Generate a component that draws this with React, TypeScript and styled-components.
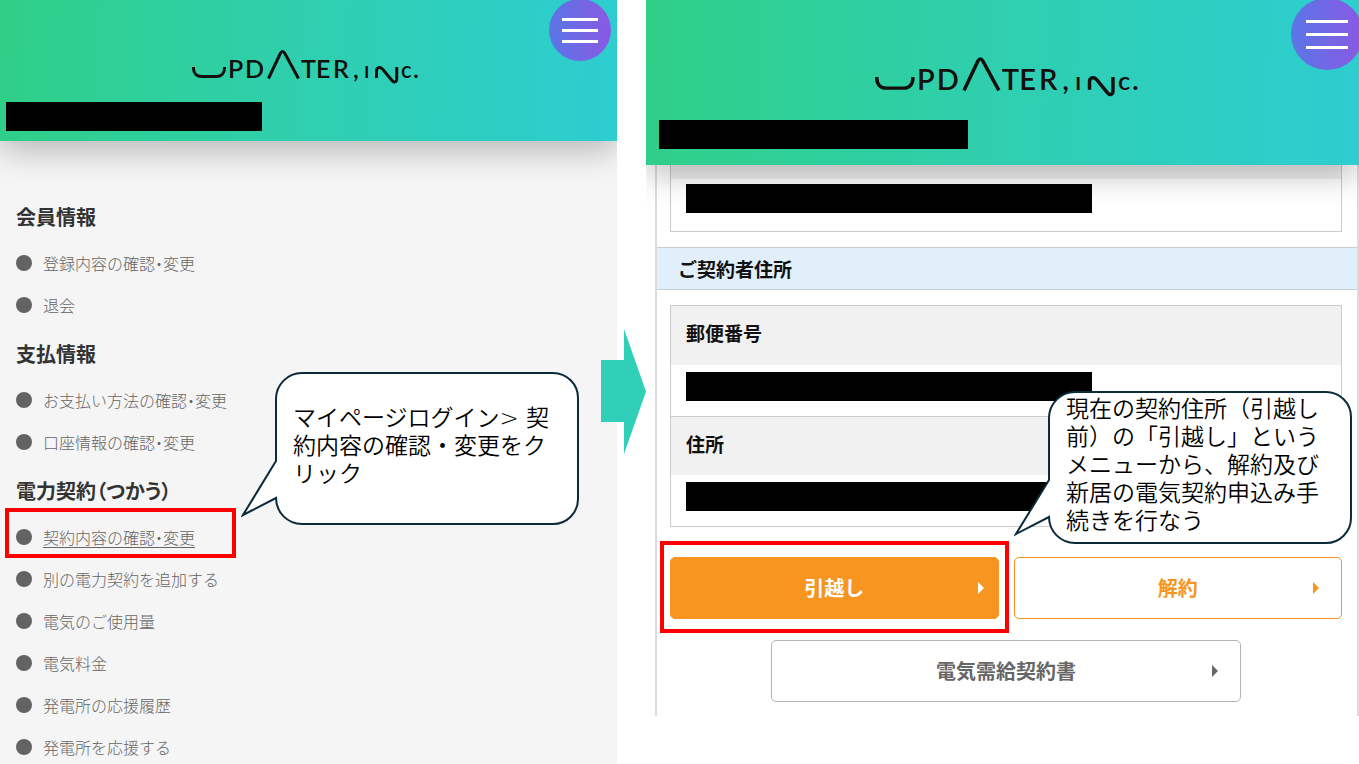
import React from "react";
import styled, { createGlobalStyle, css } from "styled-components";

const GlobalStyle = createGlobalStyle`
  *, *::before, *::after { box-sizing: border-box; }
  body {
    margin: 0;
    background: #fff;
    font-family: "Noto Sans CJK JP", sans-serif;
    color: #333;
  }
  h2, h3, p, ul, dl, dd { margin: 0; padding: 0; }
`;

const Page = styled.main`
  position: relative;
  display: grid;
  grid-template-columns: 617fr 713fr;
  column-gap: 29px;
  min-height: 100vh;
`;

const Panel = styled.section<{ $tinted?: boolean }>`
  position: relative;
  min-width: 0;
  background: ${(p) => (p.$tinted ? "#f5f5f5" : "#fff")};
`;

const PanelClip = styled.div`
  overflow: hidden;
  height: 100%;
`;

const Header = styled.header<{ $large?: boolean }>`
  position: relative;
  z-index: 1;
  display: flex;
  flex-direction: column;
  gap: ${(p) => (p.$large ? 22 : 17)}px;
  padding: ${(p) => (p.$large ? "55px 0 16px 13px" : "48px 0 10px 6px")};
  background: linear-gradient(92deg, #2fcf88 0%, #2fcfb0 50%, #2dcdd1 100%);
  box-shadow: 0 10px 30px rgba(0, 0, 0, 0.25);
`;

const LogoLink = styled.a<{ $large?: boolean }>`
  display: block;
  align-self: center;
  width: ${(p) => (p.$large ? 270 : 231)}px;
  height: ${(p) => (p.$large ? 43 : 37)}px;
  margin-right: ${(p) => (p.$large ? 4 : 12)}px;

  svg {
    display: block;
    width: 100%;
    height: 100%;
  }
`;

const MenuButton = styled.button<{ $large?: boolean }>`
  position: absolute;
  top: ${(p) => (p.$large ? -2 : -1)}px;
  right: ${(p) => (p.$large ? -4 : 6)}px;
  width: ${(p) => (p.$large ? 72 : 62)}px;
  height: ${(p) => (p.$large ? 72 : 62)}px;
  display: flex;
  flex-direction: column;
  align-items: center;
  justify-content: center;
  gap: ${(p) => (p.$large ? 10 : 8)}px;
  padding: 0;
  border: 0;
  border-radius: 50%;
  background: linear-gradient(90deg, #5a76e6, #8a59e3);
`;

const MenuLine = styled.span<{ $large?: boolean }>`
  width: ${(p) => (p.$large ? 42 : 36)}px;
  height: 3px;
  background: #fff;
`;

const Redacted = styled.div<{ $width: number }>`
  width: ${(p) => p.$width}px;
  max-width: 100%;
  height: 29px;
  background: #000;
`;

const Menu = styled.nav`
  padding: 61px 16px 0;
`;

const MenuHeading = styled.h2`
  font-size: 20px;
  line-height: 30px;
  font-weight: 700;
  font-feature-settings: "palt";
  margin-bottom: 16px;
`;

const MenuList = styled.ul`
  list-style: none;
  display: flex;
  flex-direction: column;
  gap: 12px;

  & + ${MenuHeading} {
    margin-top: 19px;
  }
`;

const highlight = css`
  content: "";
  position: absolute;
  border: 4px solid #f00;
  pointer-events: none;
`;

const MenuItem = styled.li<{ $marked?: boolean }>`
  position: relative;
  display: flex;
  align-items: center;
  gap: 11px;
  height: 30px;

  &::before {
    content: "";
    width: 16px;
    height: 16px;
    border-radius: 50%;
    background: #636363;
  }

  ${(p) =>
    p.$marked &&
    css`
      &::after {
        ${highlight}
        top: -14px;
        bottom: -6px;
        left: -11px;
        width: 231px;
      }
    `}
`;

const MenuLink = styled.a<{ $underlined?: boolean }>`
  color: #666;
  font-size: 16px;
  line-height: 30px;
  font-weight: 300;
  font-feature-settings: "halt";
  text-decoration: ${(p) => (p.$underlined ? "underline" : "none")};
  text-underline-offset: 3px;
  text-decoration-thickness: 1px;
`;

const Contract = styled.div`
  margin-left: 9px;
  padding-bottom: 14px;
  border: solid #dcdcdc;
  border-width: 0 2px;
`;

const Fields = styled.dl<{ $continued?: boolean }>`
  margin: ${(p) => (p.$continued ? "0 15px 15px 13px" : "15px 15px 30px 13px")};
  border: 1px solid #ccc;
  border-top-width: ${(p) => (p.$continued ? 0 : 1)}px;
`;

const FieldLabel = styled.dt<{ $cut?: boolean }>`
  height: ${(p) => (p.$cut ? 14 : 59)}px;
  padding: 0 15px;
  background: #f1f1f1;
  color: #111;
  font-size: 19px;
  line-height: 54px;
  font-weight: 700;
`;

const FieldValue = styled.dd<{ $tall?: boolean }>`
  padding: ${(p) => (p.$tall ? "5px 15px 18px" : "7px 15px 15px")};

  & + dt {
    border-top: 1px solid #ccc;
  }
`;

const SectionTitle = styled.h3`
  padding: 0 21px;
  border: solid #ccc;
  border-width: 1px 0;
  background: #e1effb;
  color: #111;
  font-size: 19px;
  line-height: 41px;
  font-weight: 700;
`;

const Actions = styled.div`
  display: flex;
  flex-wrap: wrap;
  justify-content: center;
  gap: 21px 15px;
  padding: 0 15px 0 13px;
`;

const ActionSlot = styled.div<{ $wide?: boolean; $marked?: boolean }>`
  position: relative;
  flex: ${(p) => (p.$wide ? "0 0 70%" : "1 1 40%")};

  ${(p) =>
    p.$marked &&
    css`
      &::after {
        ${highlight}
        top: -16px;
        right: -10px;
        bottom: -14px;
        left: -10px;
      }
    `}
`;

type Tone = "solid" | "outline" | "neutral";

const tones = {
  solid: { text: "#fff", border: "#f89521", back: "#f89521", inset: 14 },
  outline: { text: "#f89521", border: "#f89521", back: "#fff", inset: 22 },
  neutral: { text: "#666", border: "#b5b5b5", back: "#fff", inset: 22 },
};

const ActionButton = styled.button<{ $tone: Tone }>`
  position: relative;
  display: block;
  width: 100%;
  height: 62px;
  padding: 0;
  border: 1px solid ${(p) => tones[p.$tone].border};
  border-radius: 5px;
  background: ${(p) => tones[p.$tone].back};
  color: ${(p) => tones[p.$tone].text};
  font-family: inherit;
  font-size: 20px;
  line-height: 30px;
  font-weight: 700;

  &::after {
    content: "";
    position: absolute;
    top: 24px;
    right: ${(p) => tones[p.$tone].inset}px;
    border: 6px solid transparent;
    border-left-color: currentColor;
    border-right-width: 0;
  }
`;

const Balloon = styled.div<{ $side: "left" | "right" }>`
  position: absolute;
  z-index: 2;
  width: 339px;
  height: 154px;
  ${(p) =>
    p.$side === "left"
      ? css`
          top: 372px;
          left: 241px;
        `
      : css`
          top: 391px;
          right: 6px;
        `}
  display: flex;
  align-items: ${(p) => (p.$side === "left" ? "center" : "flex-start")};
  padding: ${(p) => (p.$side === "left" ? "0 0 6px 52px" : "4px 0 0 52px")};

  svg {
    position: absolute;
    inset: 0;
  }
`;

const BalloonText = styled.p`
  position: relative;
  color: #000;
  font-family: "DejaVu Sans", "Noto Sans CJK JP", sans-serif;
  font-size: 23px;
  line-height: 28px;
  font-weight: 350;
  white-space: nowrap;
`;

const StepArrow = styled.svg`
  position: absolute;
  z-index: 1;
  top: 329px;
  right: -29px;
  width: 45px;
  height: 126px;
`;

function Logo({ large }: { large?: boolean }) {
  return (
    <LogoLink href="#" $large={large} aria-label="UPDATER, inc.">
      <svg viewBox="0 0 231 37">
        <g fill="none" stroke="#14100e" strokeWidth="3">
          <path d="M3.500 19v1.500c0 5 3.500 8 8 8h15c4.500 0 8-3 8-8V19" />
          <path d="M78.500 30.500 90.300 5.500q2.200-4 4.600 0L108.500 30.500" />
          <path d="M186.500 30V23c0-3.500 3.500-4.500 6-2l9.500 11.500c2 2.500 4.700 1.500 4.700-1.500V19" />
        </g>
        <g fill="#14100e" fontFamily="Lato, sans-serif" fontSize="25" fontWeight="600">
          <text x="38" y="30">P</text>
          <text x="55" y="30">D</text>
          <text x="111" y="30">T</text>
          <text x="126" y="30">E</text>
          <text x="143" y="30">R</text>
          <text x="163" y="30">,</text>
          <text x="174" y="30" fontSize="22">ı</text>
          <text x="211" y="30" fontSize="22">c</text>
          <text x="223" y="30">.</text>
        </g>
      </svg>
    </LogoLink>
  );
}

function SiteHeader({ large, width }: { large?: boolean; width: number }) {
  return (
    <Header $large={large}>
      <Logo large={large} />
      <Redacted $width={width} />
      <MenuButton type="button" aria-label="メニュー" $large={large}>
        <MenuLine $large={large} />
        <MenuLine $large={large} />
        <MenuLine $large={large} />
      </MenuButton>
    </Header>
  );
}

function Callout({ side, lines }: { side: "left" | "right"; lines: string[] }) {
  return (
    <Balloon $side={side}>
      <svg width="339" height="154" aria-hidden="true">
        <path
          d="M61 1H312a25 25 0 0 1 25 25V127a25 25 0 0 1-25 25H61a26 26 0 0 1-26-26L2 143 35 89V27a26 26 0 0 1 26-26Z"
          fill="#fff"
          stroke="#0b2a3a"
          strokeWidth="2"
        />
      </svg>
      <BalloonText>
        {lines.map((line, i) => (
          <React.Fragment key={line}>
            {i > 0 && <br />}
            {line}
          </React.Fragment>
        ))}
      </BalloonText>
    </Balloon>
  );
}

const marked = "契約内容の確認・変更";

const groups = [
  { title: "会員情報", items: ["登録内容の確認・変更", "退会"] },
  { title: "支払情報", items: ["お支払い方法の確認・変更", "口座情報の確認・変更"] },
  {
    title: "電力契約（つかう）",
    items: [
      marked,
      "別の電力契約を追加する",
      "電気のご使用量",
      "電気料金",
      "発電所の応援履歴",
      "発電所を応援する",
    ],
  },
];

export default function App() {
  return (
    <>
      <GlobalStyle />
      <Page>
        <Panel $tinted>
          <PanelClip>
            <SiteHeader width={256} />
            <Menu>
              {groups.map((group) => (
                <React.Fragment key={group.title}>
                  <MenuHeading>{group.title}</MenuHeading>
                  <MenuList>
                    {group.items.map((item) => (
                      <MenuItem key={item} $marked={item === marked}>
                        <MenuLink href="#" $underlined={item === marked}>
                          {item}
                        </MenuLink>
                      </MenuItem>
                    ))}
                  </MenuList>
                </React.Fragment>
              ))}
            </Menu>
          </PanelClip>
          <Callout
            side="left"
            lines={["マイページログイン> 契", "約内容の確認・変更をク", "リック"]}
          />
          <StepArrow viewBox="0 0 45 126" aria-hidden="true">
            <path d="M0 31H23V0L45 62.500 23 125V93H0Z" fill="#2fcfb8" />
          </StepArrow>
        </Panel>

        <Panel>
          <PanelClip>
            <SiteHeader large width={309} />
            <Contract>
              <Fields $continued>
                <FieldLabel $cut />
                <FieldValue $tall>
                  <Redacted $width={406} />
                </FieldValue>
              </Fields>
              <SectionTitle>ご契約者住所</SectionTitle>
              <Fields>
                <FieldLabel>郵便番号</FieldLabel>
                <FieldValue>
                  <Redacted $width={406} />
                </FieldValue>
                <FieldLabel>住所</FieldLabel>
                <FieldValue>
                  <Redacted $width={406} />
                </FieldValue>
              </Fields>
              <Actions>
                <ActionSlot $marked>
                  <ActionButton type="button" $tone="solid">引越し</ActionButton>
                </ActionSlot>
                <ActionSlot>
                  <ActionButton type="button" $tone="outline">解約</ActionButton>
                </ActionSlot>
                <ActionSlot $wide>
                  <ActionButton type="button" $tone="neutral">電気需給契約書</ActionButton>
                </ActionSlot>
              </Actions>
            </Contract>
          </PanelClip>
          <Callout
            side="right"
            lines={[
              "現在の契約住所（引越し",
              "前）の「引越し」という",
              "メニューから、解約及び",
              "新居の電気契約申込み手",
              "続きを行なう",
            ]}
          />
        </Panel>
      </Page>
    </>
  );
}
